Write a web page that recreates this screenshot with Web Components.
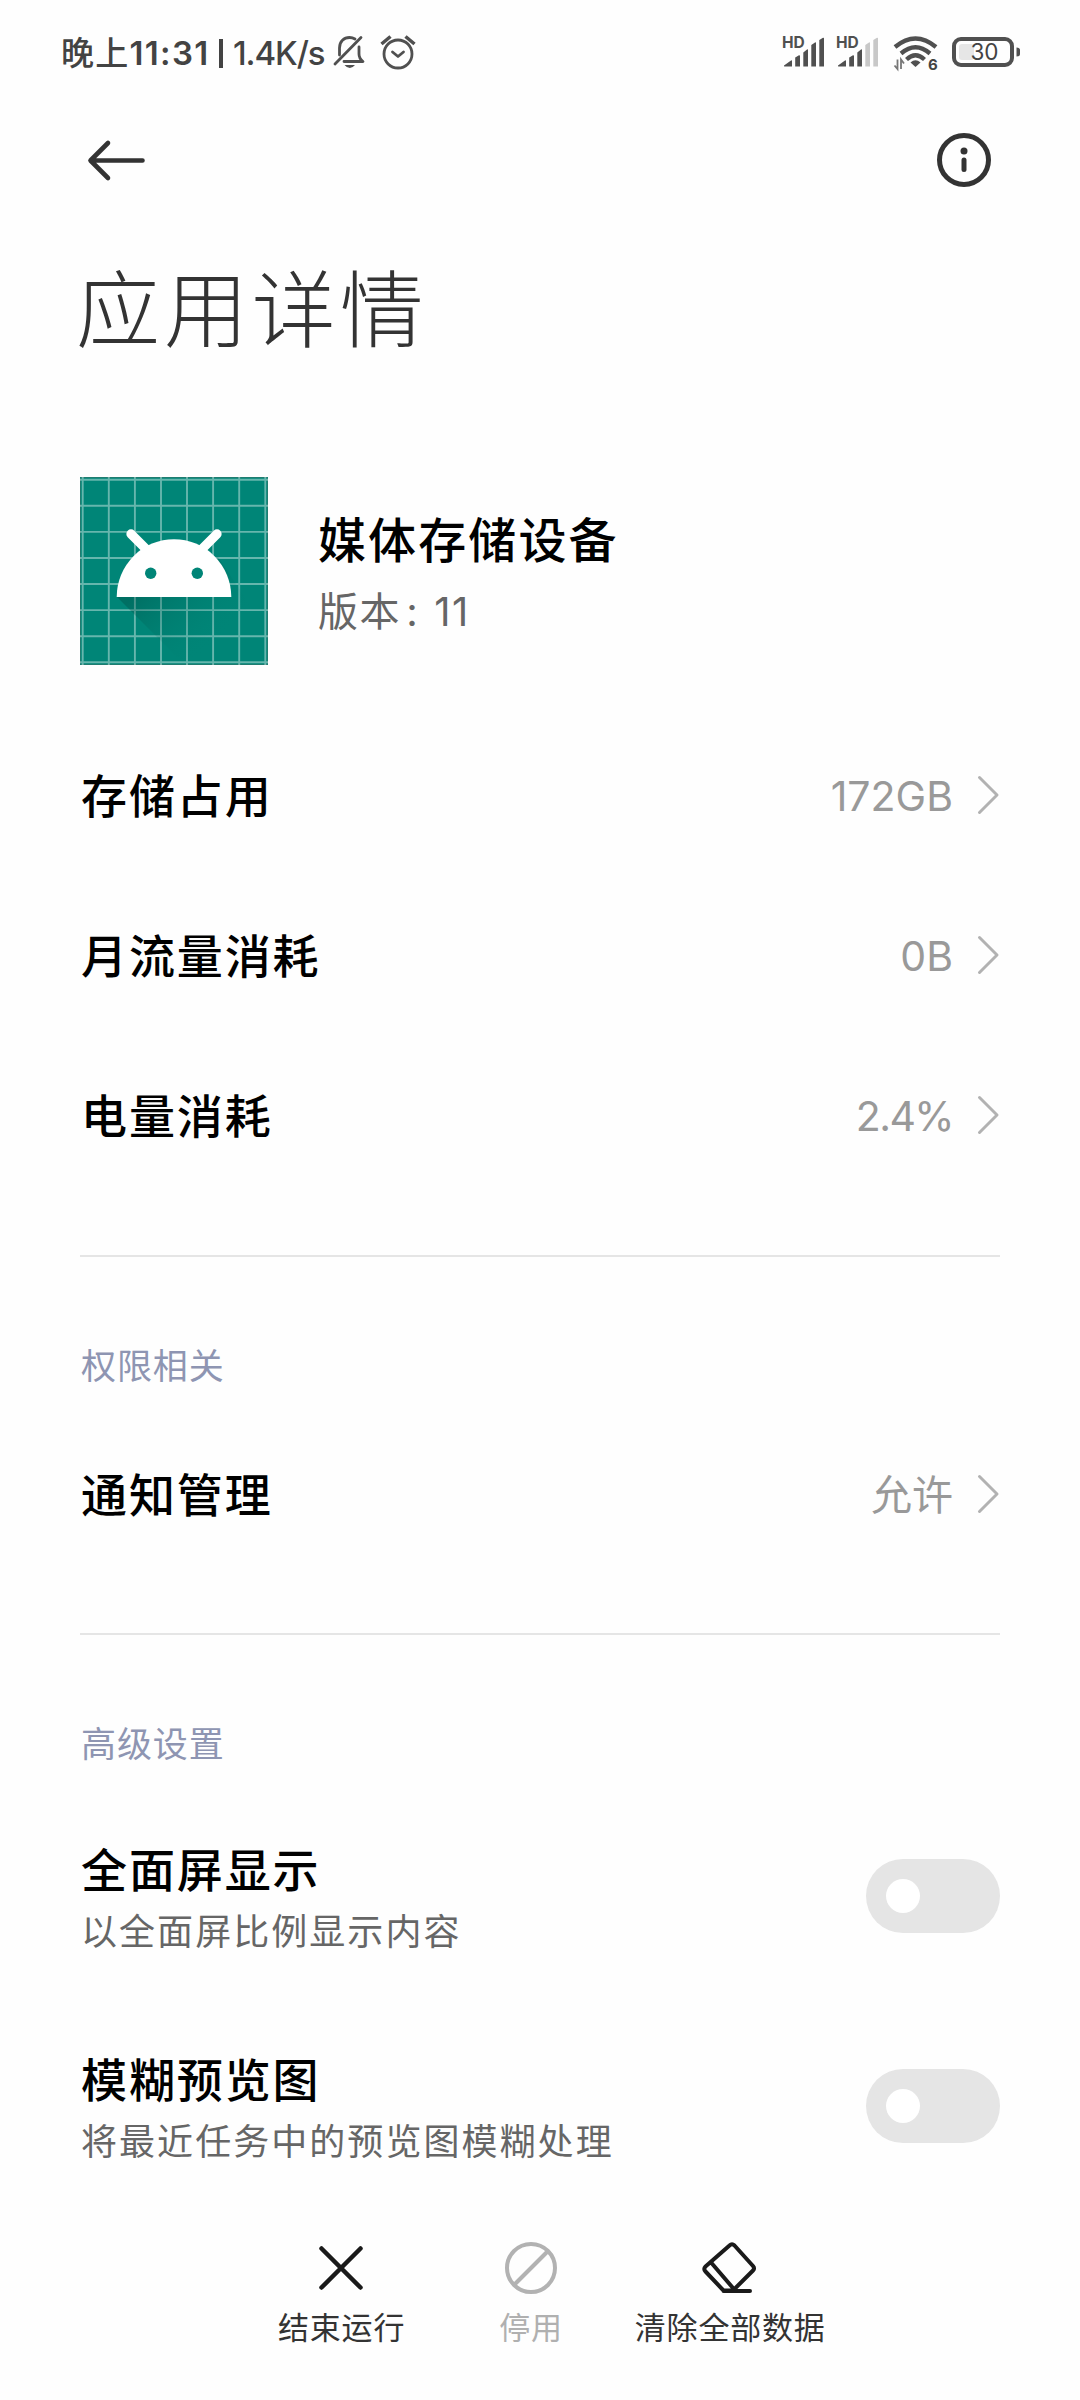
<!DOCTYPE html>
<html lang="zh-CN">
<head>
<meta charset="utf-8">
<title>应用详情</title>
<style>
html,body{margin:0;padding:0;background:#fefefe}
body{width:1080px;height:2400px;overflow:hidden;font-family:Inter,"Noto Sans CJK SC",sans-serif;color:#000}
</style>
</head>
<body>
<app-details-page></app-details-page>
<script>
function define(name, css, html) {
  const tpl = document.createElement('template');
  tpl.innerHTML = '<style>*{box-sizing:border-box}svg{display:block;flex:none;overflow:visible}' + css + '</style>' + html;
  customElements.define(name, class extends HTMLElement {
    constructor() {
      super();
      this.attachShadow({ mode: 'open' }).appendChild(tpl.content.cloneNode(true));
    }
  });
}

define('signal-bars', `
  :host{display:flex;flex-direction:column;width:41px;height:31px;color:#505050}
  .hd{font-size:15.5px;font-weight:700;line-height:11px;height:11px;margin-left:-1px}
  svg{margin-top:-11px}
  .weak{fill:var(--weak,#505050)}`, `
  <div class="hd">HD</div>
  <svg width="41" height="30" viewBox="0 0 41 30" fill="#505050">
    <path d="M1 28.5L8 23.5Q9 23 9 24V29.500H1.500Q.8 29.500 1 28.500ZM12.200 20.500L16 18.200Q17 18 17 19V29.500H12.200ZM20.300 15.500L24 12.500Q25 12 25 13V29.500H20.300Z"/>
    <path class="weak" d="M28.300 8L32 5.500Q33 5 33 6V29.500H28.300ZM36.300 3L40 .8Q41 .4 41 1.500V29.500H36.300Z"/>
  </svg>`);

define('status-bar', `
  :host{display:flex;height:106px;padding:0 59px 2px 61px;align-items:center;color:#434343}
  .time{font-size:33px;font-weight:500;letter-spacing:1.300px;line-height:40px;white-space:nowrap;width:148px;margin:2px 10px 0 0}
  .time b{font-weight:600}
  .bar{width:4px;height:29px;background:#434343;margin:2px 10px 0 0}
  .speed{font-size:33px;font-weight:500;letter-spacing:-1.100px;line-height:40px;width:91px;margin-top:2px;white-space:nowrap}
  .bell{margin-left:9px}.alarm{margin-left:15px}
  .grow{flex:1}
  .s2{margin-left:13px;--weak:#c8c8c8}
  .wifi{margin:2px 14px 0 15px}
  .wifi text{font:700 15px Inter,sans-serif}`, `
  <div class="time">晚上<b>11:31</b></div><div class="bar"></div><div class="speed">1.4K/s</div>
  <svg class="bell" width="32" height="34" viewBox="0 0 32 34" fill="none" stroke="#505050" stroke-width="2.800" stroke-linecap="round" stroke-linejoin="round">
    <path d="M2 29L28 2.500M6.500 20V13C6.500 6.500 11 2.500 16.500 2.500Q19.500 2.500 22 4M26 12V19C26 22.500 28 25 30 26.500H11"/>
    <path d="M11.500 30H22Q19.500 33 16.800 33Q14 33 11.500 30Z" fill="#505050" stroke="none"/>
  </svg>
  <svg class="alarm" width="36" height="34" viewBox="0 0 36 34" fill="none" stroke="#505050" stroke-width="2.800" stroke-linecap="round" stroke-linejoin="round">
    <circle cx="18" cy="19" r="14"/><path d="M12.500 17L18 21.500L23.500 17"/><path stroke-width="3.500" stroke-linecap="butt" d="M1.500 9L10.500 1.500M34.500 9L25.500 1.500"/>
  </svg>
  <div class="grow"></div>
  <signal-bars></signal-bars><signal-bars class="s2"></signal-bars>
  <svg class="wifi" width="45" height="34" viewBox="0 0 45 34" fill="none" stroke="#505050" stroke-width="4.300">
    <path d="M2 11Q22.500 -6 43 11M8 17.500Q22.500 5 37 17.500M13.500 23.500Q22.500 15 31.500 23.500"/>
    <path d="M17.500 26.500Q22.500 22 27.500 26.500L22.500 31Z" fill="#505050" stroke="none"/>
    <path d="M4.500 23.500V33L1.500 29.500M8 33V23.500L11 27.500" stroke-width="1.800" stroke="#777"/>
    <text x="35" y="33.500" fill="#444" stroke="none">6</text>
  </svg>
  <svg width="69" height="30" viewBox="0 0 69 30">
    <rect x="2" y="2" width="58" height="26" rx="7" fill="none" stroke="#505050" stroke-width="4"/>
    <rect x="7" y="7" width="15" height="16" rx="3" fill="#e6e6e6"/>
    <path d="M64.500 10.500Q68 10.500 68 13V17Q68 19.500 64.500 19.500Z" fill="#505050"/>
    <text x="32.500" y="23.200" text-anchor="middle" fill="#434343" font-size="22.500" font-family="Inter,sans-serif">30</text>
  </svg>`);

define('nav-header', `
  :host{display:block;height:371px;padding:26px 89px 0 76px}
  .bar{display:flex;justify-content:space-between;align-items:center;height:56px;padding-left:11px}
  h1{margin:63px 0 0;font-weight:300;font-size:84px;letter-spacing:3.900px;line-height:120px;color:#333;height:120px;white-space:nowrap}`, `
  <div class="bar">
    <svg width="58" height="40" viewBox="0 0 58 40" fill="none" stroke="#333" stroke-width="4.600" stroke-linecap="round" stroke-linejoin="round"><path d="M21 3L3.500 20.500L21 38M4 20.500H55.500"/></svg>
    <svg width="54" height="54" viewBox="0 0 54 54"><circle cx="27" cy="27" r="24.500" fill="none" stroke="#333" stroke-width="5"/><circle cx="27" cy="18" r="3.500" fill="#333"/><path d="M27 27V36.500" stroke="#333" stroke-width="5" stroke-linecap="round"/></svg>
  </div>
  <h1><slot></slot></h1>`);

define('android-icon', `:host{display:block;width:188px;height:188px;flex:none}`, `
  <svg width="188" height="188" viewBox="0 0 188 188">
    <defs><linearGradient id="sh" x1="37" y1="70" x2="130" y2="170" gradientUnits="userSpaceOnUse"><stop offset=".35" stop-color="#003c34" stop-opacity=".3"/><stop offset="1" stop-color="#008577" stop-opacity="0"/></linearGradient></defs>
    <rect width="188" height="188" fill="#008577"/>
    <path d="M.5 .5H187.500V187.500H.5Z" fill="none" stroke="#1f7c70" stroke-width="1"/>
    <path d="M2.700 0V188M28.800 0V188M54.900 0V188M81 0V188M107 0V188M133.100 0V188M159.200 0V188M185.300 0V188M0 2.700H188M0 28.800H188M0 54.900H188M0 81H188M0 107H188M0 133.100H188M0 159.200H188M0 185.300H188" stroke="#fff" stroke-opacity=".4" stroke-width="1.900"/>
    <path d="M37 120L105 188H188V155L138 80Z" fill="url(#sh)"/>
    <path d="M36.700 120A57.300 57.800 0 0 1 151.300 120Z" fill="#fff"/>
    <path d="M51 57L67 73M137 57L121 73" stroke="#fff" stroke-width="9.300" stroke-linecap="round"/>
    <circle cx="70.700" cy="96.300" r="5.700" fill="#008577"/><circle cx="117.300" cy="96.300" r="5.700" fill="#008577"/>
  </svg>`);

define('app-summary', `
  :host{display:flex;height:239px;padding-left:80px}
  .text{padding:34px 0 0 50px;white-space:nowrap}
  .name{font-size:48px;font-weight:500;letter-spacing:2.100px;line-height:60px;height:60px}
  .ver{font-size:40px;letter-spacing:1.600px;line-height:50px;margin-top:16px;color:#666}`, `
  <android-icon></android-icon>
  <div class="text"><div class="name"><slot name="name"></slot></div><div class="ver"><slot name="version"></slot></div></div>`);

define('nav-row', `
  :host{display:flex;align-items:center;height:160px;padding:0 81px;white-space:nowrap}
  .label{flex:1;font-size:46px;font-weight:500;letter-spacing:1.900px;line-height:60px}
  .value{font-size:41px;font-weight:400;letter-spacing:var(--ls,0px);line-height:60px;color:#999;margin-right:25px}
  svg{margin-top:-2px}`, `
  <div class="label"><slot></slot></div><div class="value"><slot name="value"></slot></div>
  <svg width="21" height="38" viewBox="0 0 21 38"><path d="M1.500 1.500L19 19L1.500 36.500" fill="none" stroke="#b2b2b2" stroke-width="3" stroke-linecap="round" stroke-linejoin="round"/></svg>`);

define('settings-section', `
  :host{display:block}
  hr{border:0;margin:0 80px;height:2px;background:#e5e5e5}
  h2{margin:0;padding:84px 81px 0;font-weight:400;font-size:35px;letter-spacing:.9px;line-height:50px;height:158px;color:#8e95b2}`, `
  <hr><h2><slot name="title"></slot></h2><slot></slot>`);

define('toggle-switch', `
  :host{display:flex;align-items:center;width:134px;height:74px;border-radius:37px;background:#e5e5e5;padding-left:20px}
  i{width:34px;height:34px;border-radius:50%;background:#fff}`, `<i></i>`);

define('switch-row', `
  :host{display:flex;align-items:center;justify-content:space-between;height:210px;padding:0 80px 0 81px;white-space:nowrap}
  .t{font-size:46px;font-weight:500;letter-spacing:1.900px;line-height:60px}
  .d{font-size:36px;letter-spacing:2.050px;line-height:50px;margin-top:7px;color:#666}
  toggle-switch{margin-bottom:4px}`, `
  <div><div class="t"><slot></slot></div><div class="d"><slot name="desc"></slot></div></div>
  <toggle-switch></toggle-switch>`);

define('action-item', `
  :host{display:flex;flex-direction:column;align-items:center;color:#333}
  :host([disabled]){color:#b0b0b0}
  .icon{height:56px;display:flex;align-items:center}
  .l{font-size:31px;letter-spacing:.8px;line-height:44px;margin-top:10px;white-space:nowrap}`, `
  <div class="icon"><slot name="icon"></slot></div><div class="l"><slot></slot></div>`);

define('action-bar', `
  :host{display:flex;gap:94px;padding:38px 0 0 278px;height:198px}`, `
  <action-item><svg slot="icon" width="46" height="44" viewBox="0 0 46 44"><path d="M2.500 2.500L41.500 41.500M41.500 2.500L2.500 41.500" stroke="#1a1a1a" stroke-width="4.500" stroke-linecap="round"/></svg>结束运行</action-item>
  <action-item disabled><svg slot="icon" width="52" height="52" viewBox="0 0 52 52"><circle cx="26" cy="26" r="24" fill="none" stroke="#b2b2b2" stroke-width="4"/><path d="M9.500 42.500L42.500 9.500" stroke="#b2b2b2" stroke-width="4"/></svg>停用</action-item>
  <action-item style="margin-left:-22px"><svg slot="icon" width="56" height="52" viewBox="0 0 56 52"><path d="M27.500 3.500Q30 1 32.500 3.500L51 24Q53 26.500 51 28.500L31 48.500H21.500L3.500 29.500Q1 27 3.500 24.500ZM9.500 21L31 46M21.500 49H48" fill="none" stroke="#1a1a1a" stroke-width="4" stroke-linecap="round" stroke-linejoin="round"/></svg>清除全部数据</action-item>`);

define('app-details-page', `
  :host{display:flex;flex-direction:column;width:1080px;height:2400px;background:#fefefe}
  .usage{height:539px}
  .perm{height:378px}
  .adv{height:569px}
  .colon{margin:0 2px 0 5px}
  .percent{--ls:-1.600px}`, `
  <status-bar></status-bar>
  <nav-header>应用详情</nav-header>
  <app-summary><span slot="name">媒体存储设备</span><span slot="version">版本<span class="colon">:</span> 11</span></app-summary>
  <div class="usage">
    <nav-row>存储占用<span slot="value">172GB</span></nav-row>
    <nav-row>月流量消耗<span slot="value">0B</span></nav-row>
    <nav-row class="percent">电量消耗<span slot="value">2.4%</span></nav-row>
  </div>
  <settings-section class="perm"><span slot="title">权限相关</span>
    <nav-row>通知管理<span slot="value">允许</span></nav-row>
  </settings-section>
  <settings-section class="adv"><span slot="title">高级设置</span>
    <switch-row>全面屏显示<span slot="desc">以全面屏比例显示内容</span></switch-row>
    <switch-row>模糊预览图<span slot="desc">将最近任务中的预览图模糊处理</span></switch-row>
  </settings-section>
  <action-bar></action-bar>`);
</script>
</body>
</html>
